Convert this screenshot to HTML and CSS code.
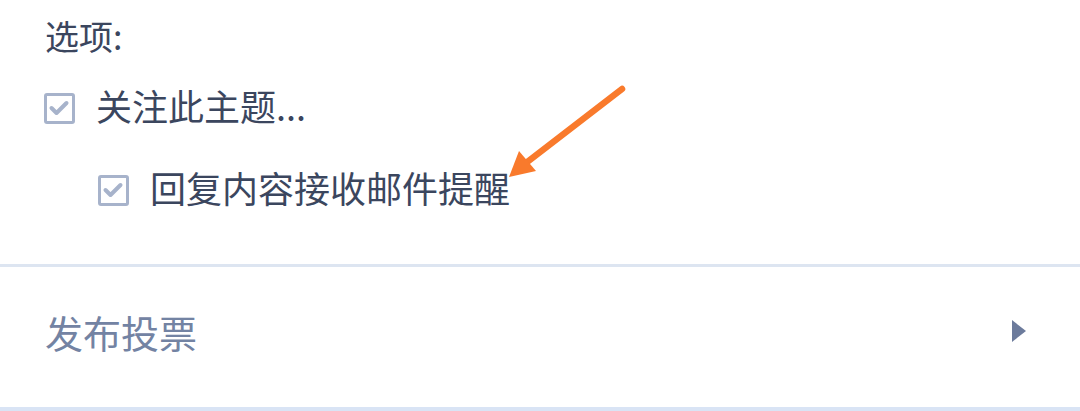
FILE: index.html
```html
<!DOCTYPE html>
<html lang="zh">
<head>
<meta charset="utf-8">
<link rel="stylesheet" href="styles.css">
</head>
<body>
<div class="page">
  <section class="options">
    <div class="label">选项:</div>
    <div class="opt">
      <span class="cb"><svg viewBox="0 0 25 25" width="25" height="25"><path d="M4.5 12 L9.5 17 L19.5 7" fill="none" stroke="#a7b3cb" stroke-width="4" stroke-linecap="round" stroke-linejoin="round"/></svg></span>
      <span class="txt">关注此主题...</span>
    </div>
    <div class="opt sub">
      <span class="cb"><svg viewBox="0 0 25 25" width="25" height="25"><path d="M4.5 12 L9.5 17 L19.5 7" fill="none" stroke="#a7b3cb" stroke-width="4" stroke-linecap="round" stroke-linejoin="round"/></svg></span>
      <span class="txt">回复内容接收邮件提醒</span>
    </div>
  </section>
  <div class="poll">
    <span class="poll-text">发布投票</span>
    <span class="tri"></span>
  </div>
  <svg class="arrow" width="1080" height="411" viewBox="0 0 1080 411">
    <line x1="622" y1="89" x2="522" y2="166" stroke="#f97a2c" stroke-width="6.5" stroke-linecap="round"/>
    <polygon points="509,177 519,151 536,171" fill="#f97a2c"/>
  </svg>
</div>
</body>
</html>
```
FILE: styles.css
```css
* { box-sizing: border-box; }
html, body { margin: 0; padding: 0; background: #fff; }
body {
  font-family: "Noto Sans CJK SC", "Noto Sans", sans-serif;
  color: #3b465e;
}
.page { position: relative; width: 1080px; height: 411px; overflow: hidden; }
.options {
  padding: 12px 0 48px 44px;
  height: 267px;
  border-bottom: 3px solid #dde5f1;
}
.label {
  height: 48px;
  line-height: 48px;
  font-size: 34px;
  padding-left: 1px;
  margin-bottom: 1px;
}
.opt {
  display: flex;
  align-items: center;
  height: 48px;
  margin-top: 24px;
  font-size: 36px;
}
.opt.sub { margin-top: 34px; padding-left: 54px; }
.cb {
  flex: none;
  width: 31px;
  height: 31px;
  border: 3px solid #a7b3cb;
  border-radius: 3px;
  display: flex;
  align-items: center;
  justify-content: center;
  margin-right: 21px;
}
.cb svg { display: block; }
.txt { line-height: 48px; padding-bottom: 6px; }
.poll {
  height: 144px;
  display: flex;
  align-items: center;
  justify-content: space-between;
  padding: 0 54px 12px 45px;
  border-bottom: 4px solid #d9e4f5;
}
.poll-text {
  font-size: 38px;
  color: #7383a3;
}
.tri {
  width: 0;
  height: 0;
  border-top: 11px solid transparent;
  border-bottom: 11px solid transparent;
  border-left: 14px solid #6c7b9c;
}
.arrow { position: absolute; left: 0; top: 0; pointer-events: none; }
```
